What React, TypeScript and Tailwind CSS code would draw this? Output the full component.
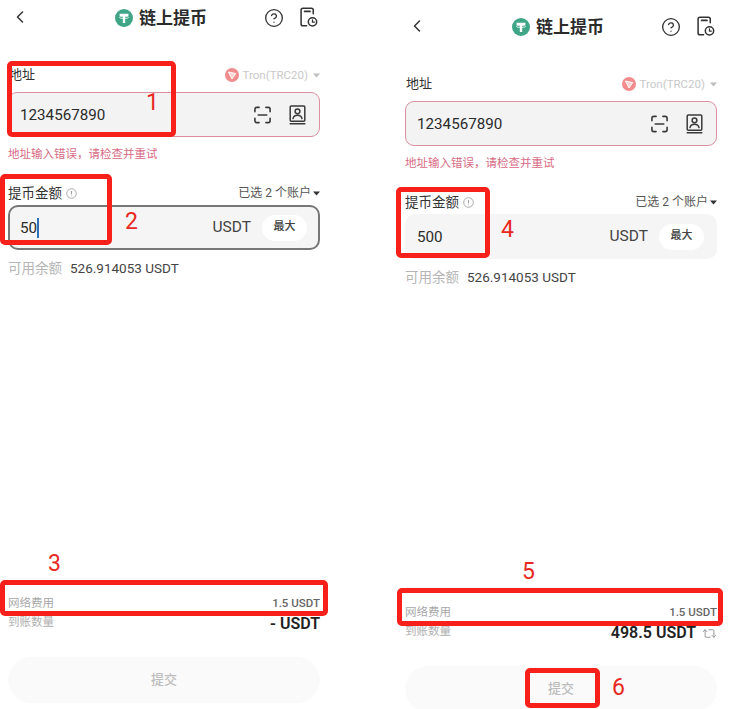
import { ChevronLeft, CircleHelp, Repeat2 } from "lucide-react";

const TetherIcon = () => (
  <svg width="18" height="18" viewBox="0 0 18 18" className="shrink-0">
    <circle cx="9" cy="9" r="9" fill="#3fa587" />
    <path d="M4.6 4.8h8.8v2.1h-3.2v7h-2.4v-7H4.6z" fill="#fff" />
    <ellipse cx="9" cy="8.3" rx="4.6" ry="1.1" fill="none" stroke="#fff" strokeWidth="0.8" />
  </svg>
);

const RecordsIcon = () => (
  <svg width="19" height="21" viewBox="0 0 20 22" fill="none" stroke="#333" strokeWidth="1.6" strokeLinecap="round">
    <path d="M15 7V3.2C15 2 14.2 1.2 13 1.2H4.2C3 1.2 2.2 2 2.2 3.2V17.8C2.2 19 3 19.8 4.2 19.8H8" />
    <path d="M6 4.6h5.5" strokeWidth="2" />
    <circle cx="14.2" cy="15.6" r="4.4" />
    <path d="M14.2 13.4v2.4h2" strokeWidth="1.3" />
  </svg>
);

const TronIcon = () => (
  <svg width="14" height="14" viewBox="0 0 14 14" className="shrink-0">
    <circle cx="7" cy="7" r="7" fill="#f08b8e" />
    <path d="M3.4 4l7.4 1.5L7 11z" fill="#fbd5d6" stroke="#fff" strokeWidth="0.9" strokeLinejoin="round" />
  </svg>
);

const ScanIcon = () => (
  <svg width="19" height="18" viewBox="0 0 20 19" fill="none" stroke="#3a3a3a" strokeWidth="1.7" strokeLinecap="round" strokeLinejoin="round">
    <path d="M2 6V3.4C2 2.3 2.8 1.5 3.9 1.5H6.4" />
    <path d="M13.6 1.5h2.5c1.1 0 1.9.8 1.9 1.9V6" />
    <path d="M2 13v2.6c0 1.1.8 1.9 1.9 1.9h2.5" />
    <path d="M13.6 17.5h2.5c1.1 0 1.9-.8 1.9-1.9V13" />
    <path d="M5.5 9.5h9" />
  </svg>
);

const ContactIcon = () => (
  <svg width="17" height="20" viewBox="0 0 17 20" fill="none" stroke="#3a3a3a" strokeWidth="1.5" strokeLinecap="round" strokeLinejoin="round">
    <rect x="1.2" y="1" width="14.6" height="15.2" rx="1" />
    <circle cx="8.5" cy="6.3" r="2.4" />
    <path d="M4 13.6c.5-2.4 2.2-3.4 4.5-3.4s4 1 4.5 3.4" />
    <path d="M1.2 18.8h14.6" />
  </svg>
);

const InfoDot = () => (
  <svg width="11" height="11" viewBox="0 0 11 11" fill="none" stroke="#a3a3a3" strokeWidth="0.9" className="shrink-0">
    <circle cx="5.5" cy="5.5" r="4.8" />
    <path d="M5.5 3v3.4" strokeWidth="1.1" />
    <path d="M5.5 7.6v.6" strokeWidth="1.1" />
  </svg>
);

const Caret = ({ color }: { color: string }) => (
  <svg width="7" height="5" viewBox="0 0 7 5" className="shrink-0">
    <path d="M0 .5h7L3.5 4.5z" fill={color} />
  </svg>
);

type PanelProps = {
  amount: string;
  caret?: boolean;
  focused?: boolean;
  received: string;
  swap?: boolean;
};

function Panel({ amount, caret, focused, received, swap }: PanelProps) {
  return (
    <div className="w-[312px] shrink-0">
      <div className="relative flex h-[34px] items-center justify-center">
        <ChevronLeft className="absolute left-[2px] top-[7px] text-[#333]" size={20} strokeWidth={1.8} />
        <div className="ml-[-6px] mt-[1px] flex items-center gap-[6px]">
          <TetherIcon />
          <span className="text-[17px] font-semibold leading-6 text-[#2b2b2b]">链上提币</span>
        </div>
        <div className="absolute right-[2px] top-[7px] flex items-center gap-[15px]">
          <CircleHelp className="text-[#333]" size={20} strokeWidth={1.6} />
          <RecordsIcon />
        </div>
      </div>

      <div className="mt-[32px] flex h-[18px] items-center justify-between">
        <span className="ml-[1px] text-[13px] leading-[18px] text-[#333]">地址</span>
        <div className="flex items-center gap-[2px]">
          <TronIcon />
          <span className="ml-[2px] text-[11.5px] leading-[18px] text-[#c9c9c9]">Tron(TRC20)</span>
          <span className="ml-[3px]"><Caret color="#bdbdbd" /></span>
        </div>
      </div>

      <div className="mt-2 flex h-[45px] items-center justify-between rounded-[9px] border-[1.5px] border-[#dc8fa1] bg-[#f3f3f3] pl-[11px] pr-[13px]">
        <span className="pt-[2px] text-[15.2px] text-[#2b2b2b]">1234567890</span>
        <div className="flex items-center gap-[17px]">
          <ScanIcon />
          <ContactIcon />
        </div>
      </div>

      <div className="mt-[9px] h-4 text-[11.5px] leading-4 text-[#d76a84]">地址输入错误，请检查并重试</div>

      <div className="mt-[22px] flex h-[18px] items-center justify-between">
        <div className="flex items-center gap-[4px]">
          <span className="text-[13.5px] leading-[18px] text-[#333]">提币金额</span>
          <InfoDot />
        </div>
        <div className="flex items-center gap-[2px]">
          <span className="text-[12px] leading-[18px] text-[#555]">已选 2 个账户</span>
          <Caret color="#333" />
        </div>
      </div>

      <div
        className={
          focused
            ? "mt-[3px] flex h-[45px] items-center justify-between rounded-[10px] border-[2px] border-[#777] bg-[#f5f5f5] pl-[10px] pr-[11px]"
            : "mt-[3px] flex h-[45px] items-center justify-between rounded-[10px] border-[2px] border-[#f5f5f5] bg-[#f5f5f5] pl-[10px] pr-[11px]"
        }
      >
        <div className="flex items-center pt-[2px]">
          <span className="text-[15.2px] text-[#2b2b2b]">{amount}</span>
          {caret && <span className="h-[20px] w-[2px] bg-[#2f6fb5]" />}
        </div>
        <div className="flex items-center gap-[11px]">
          <span className="text-[15.5px] text-[#444]">USDT</span>
          <span className="flex h-[26px] w-[45px] items-center justify-center rounded-full bg-white text-[11px] font-medium text-[#444]">
            最大
          </span>
        </div>
      </div>

      <div className="mt-[10px] flex h-4 items-center gap-2 text-[13.5px] leading-4">
        <span className="text-[#b5b5b5]">可用余额</span>
        <span className="text-[#444]">526.914053 USDT</span>
      </div>

      <div className="mt-[302px] border-t border-[#f8f8f8] pt-[16px]">
        <div className="flex h-4 items-center justify-between text-[11.5px] leading-4">
          <span className="text-[#a8a8a8]">网络费用</span>
          <span className="font-medium text-[#666]">1.5 USDT</span>
        </div>
        <div className="mt-[3px] flex h-5 items-start justify-between">
          <span className="text-[11.5px] leading-4 text-[#b0b0b0]">到账数量</span>
          <div className="flex items-center gap-[6px]">
            <span className="text-[16px] font-semibold leading-5 text-[#222]">{received}</span>
            {swap && <Repeat2 className="text-[#999]" size={15} strokeWidth={1.6} />}
          </div>
        </div>
      </div>

      <div className="mt-[23px] flex h-[46px] items-center justify-center rounded-full bg-[#fafafa] text-[13px] font-medium text-[#bdbdbd]">
        提交
      </div>
    </div>
  );
}

const Mark = ({ className }: { className: string }) => (
  <div className={"absolute rounded-[5px] border-[5px] border-[#f8201a] " + className} />
);

const Num = ({ className, children }: { className: string; children: string }) => (
  <span className={"absolute text-[23px] leading-[26px] text-[#e8291f] " + className}>{children}</span>
);

export default function App() {
  return (
    <div
      className="relative h-[709px] w-[731px] overflow-hidden bg-white"
      style={{ fontFamily: '"Roboto", "Noto Sans CJK SC", sans-serif' }}
    >
      <div className="flex items-start">
        <div className="w-[397px] shrink-0 pl-2">
          <Panel amount="50" caret focused received="- USDT" />
        </div>
        <div className="w-[334px] shrink-0 pl-2 pt-[9px]">
          <Panel amount="500" received="498.5 USDT" swap />
        </div>
      </div>

      <Mark className="left-[7px] top-[61px] h-[76px] w-[169px]" />
      <Num className="left-[146px] top-[90px]">1</Num>
      <Mark className="left-0 top-[174px] h-[71px] w-[112px]" />
      <Num className="left-[125px] top-[209px]">2</Num>
      <Mark className="left-0 top-[580px] h-[36px] w-[328px]" />
      <Num className="left-[48px] top-[551px]">3</Num>

      <Mark className="left-[396px] top-[187px] h-[71px] w-[94px]" />
      <Num className="left-[501px] top-[217px]">4</Num>
      <Mark className="left-[397px] top-[588px] h-[38px] w-[326px]" />
      <Num className="left-[522px] top-[559px]">5</Num>
      <Mark className="left-[525px] top-[668px] h-[40px] w-[75px]" />
      <Num className="left-[612px] top-[675px]">6</Num>
    </div>
  );
}
